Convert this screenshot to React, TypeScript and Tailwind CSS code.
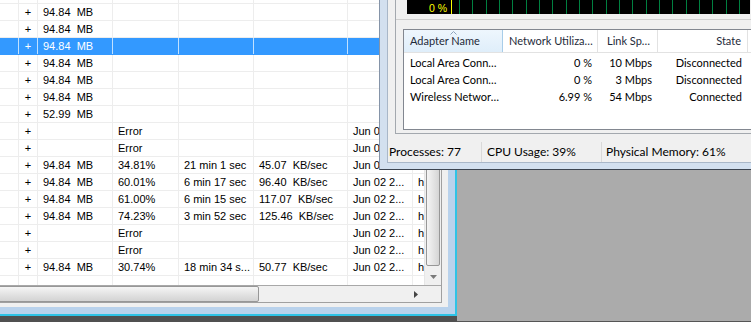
import React from "react";

type BackRow = {
  size?: string;
  pct?: string;
  time?: string;
  speed?: string;
  date?: string;
  url?: string;
  sel?: boolean;
};

const MB = "94.84  MB";
const JUN = "Jun 02 2...";

const backRows: BackRow[] = [
  { size: MB },
  { size: MB },
  { size: MB },
  { size: MB, sel: true },
  { size: MB },
  { size: MB },
  { size: MB },
  { size: "52.99  MB" },
  { pct: "Error", date: JUN, url: "h" },
  { pct: "Error", date: JUN, url: "h" },
  { size: MB, pct: "34.81%", time: "21 min 1 sec", speed: "45.07  KB/sec", date: JUN, url: "h" },
  { size: MB, pct: "60.01%", time: "6 min 17 sec", speed: "96.40  KB/sec", date: JUN, url: "h" },
  { size: MB, pct: "61.00%", time: "6 min 15 sec", speed: "117.07  KB/sec", date: JUN, url: "h" },
  { size: MB, pct: "74.23%", time: "3 min 52 sec", speed: "125.46  KB/sec", date: JUN, url: "h" },
  { pct: "Error", date: JUN, url: "h" },
  { pct: "Error", date: JUN, url: "h" },
  { size: MB, pct: "30.74%", time: "18 min 34 s...", speed: "50.77  KB/sec", date: JUN, url: "h" },
  {},
];

const adapters = [
  ["Local Area Conn…", "0 %", "10 Mbps", "Disconnected"],
  ["Local Area Conn…", "0 %", "3 Mbps", "Disconnected"],
  ["Wireless Networ…", "6.99 %", "54 Mbps", "Connected"],
];

function DownloadRow({ row }: { row: BackRow }) {
  const line = row.sel ? "border-white/70" : "border-[#ededed]";
  const cell = `shrink-0 h-full border-r ${line} pl-[5px] whitespace-pre overflow-hidden`;
  const hasPlus = row.size !== undefined || row.pct !== undefined;
  return (
    <div
      className={`flex h-[17px] border-b leading-[16px] ${
        row.sel ? "bg-[#3399ff] text-white border-[#3399ff]" : "border-[#ededed] text-black"
      }`}
    >
      <div className={`shrink-0 w-[19px] h-full border-r ${line}`} />
      <div className={`shrink-0 w-[19px] h-full border-r ${line} text-center`}>{hasPlus ? "+" : ""}</div>
      <div className={`w-[75px] ${cell}`}>{row.size}</div>
      <div className={`w-[66px] ${cell}`}>{row.pct}</div>
      <div className={`w-[75px] ${cell} pl-[4px]`}>{row.time}</div>
      <div className={`w-[94px] ${cell} pl-[4px]`}>{row.speed}</div>
      <div className={`w-[65px] ${cell} pl-[4px]`}>{row.date}</div>
      <div className="flex-1 min-w-0 h-full pl-[5px] whitespace-pre overflow-hidden">{row.url}</div>
    </div>
  );
}

function BackWindow() {
  return (
    <div className="flex flex-col w-[457px] shrink-0 h-full">
      <div className="h-[316px] w-[457px] border-r-2 border-b-2 border-[#2ec3e6]">
        <div className="h-full border-r-[7px] border-b-[7px] border-[#b9d2ec]">
          <div className="h-full border-r-[6px] border-b-[4px] border-[#f0f0f0]">
            <div className="h-full border-r border-b border-[#a0a0a0] flex flex-col bg-white">
              <div className="flex flex-1 min-h-0">
                <div className="w-[424px] shrink-0 h-full overflow-hidden text-[11px]">
                  <div className="-mt-[13px]">
                    {backRows.map((r, i) => (
                      <DownloadRow key={i} row={r} />
                    ))}
                  </div>
                </div>
                <div className="w-[17px] shrink-0 h-full flex flex-col bg-[#f0f0f0] border-l border-[#e6e6e6]">
                  <div className="mt-[20px] h-[246px] mx-px rounded-[2px] border border-[#979797] bg-gradient-to-r from-[#f5f5f5] to-[#d5d5d5]" />
                  <div className="flex-1" />
                  <div className="h-[17px] flex items-center justify-center">
                    <svg width="7" height="4" viewBox="0 0 7 4">
                      <path d="M0 0h7L3.5 4z" fill="#7a7a7a" />
                    </svg>
                  </div>
                </div>
              </div>
              <div className="h-[17px] flex border-t border-[#a8a8a8]">
                <div className="w-[424px] shrink-0 h-full flex bg-[#f0f0f0]">
                  <div className="w-[263px] h-full -ml-[4px] rounded-[2px] border border-[#979797] bg-gradient-to-b from-[#f5f5f5] to-[#d3d3d3]" />
                  <div className="flex-1" />
                  <div className="w-[17px] h-full flex items-center justify-center">
                    <svg width="4" height="7" viewBox="0 0 4 7">
                      <path d="M0 0v7l4-3.5z" fill="#444" />
                    </svg>
                  </div>
                </div>
                <div className="w-[17px] h-full bg-[#f0f0f0]" />
              </div>
            </div>
          </div>
        </div>
      </div>
      <div className="flex-1 bg-[#505050]" />
    </div>
  );
}

function NetworkGraph() {
  const xs: number[] = [];
  for (let x = 52; x < 343; x += 13.33) xs.push(Math.round(x) + 0.5);
  return (
    <svg width="343" height="14" className="block">
      <rect width="343" height="14" fill="#000" />
      {xs.map((x) => (
        <line key={x} x1={x} y1="0" x2={x} y2="14" stroke="#008040" strokeWidth="1" />
      ))}
      <line x1="44.5" y1="0" x2="44.5" y2="14" stroke="#ffff00" strokeWidth="1" />
      <text x="22" y="12" fill="#ffff00" fontSize="10.5" fontFamily="Liberation Sans, Arial, sans-serif">
        0 %
      </text>
    </svg>
  );
}

function TaskManager() {
  return (
    <div className="absolute left-[379px] top-0 w-[380px] h-[170px] border-l border-b border-l-[#8594a8] border-b-[#3c4450] font-['Lato',sans-serif]">
      <div className="h-full border-l-[7px] border-b-[6px] border-[#d3e0ef]">
        <div className="h-full border-l border-b border-[#a9b7c8] bg-[#f0f0f0] flex flex-col">
          <div className="h-[134px] pl-[7px] flex">
            <div className="flex-1 h-full border-l border-b border-[#a3a8ae] flex flex-col">
              <div className="h-[20px] border-b border-[#cfcfcf] pl-[11px]">
                <NetworkGraph />
              </div>
              <div className="mt-[9px] ml-[7px] h-[101px] border border-r-0 border-[#828790] bg-white text-[11px]">
                <div className="flex h-[23px] border-b border-[#e2e2e2] text-[#1e2a3a]">
                  <div className="relative w-[99px] h-full border-r border-[#a8cde9] bg-gradient-to-b from-[#eef6fd] to-[#dfeefa] pl-[6px] flex items-center">
                    <svg width="7" height="4" viewBox="0 0 7 4" className="absolute left-[46px] top-[1px]">
                      <path d="M0.5 3.5L3.5 0.5L6.5 3.5" fill="none" stroke="#8ea4bd" strokeWidth="1" />
                    </svg>
                    Adapter Name
                  </div>
                  <div className="w-[95px] h-full border-r border-[#e2e2e2] pl-[6px] flex items-center whitespace-nowrap">
                    Network Utiliza…
                  </div>
                  <div className="w-[60px] h-full border-r border-[#e2e2e2] pl-[9px] flex items-center whitespace-nowrap">
                    Link Sp…
                  </div>
                  <div className="w-[90px] h-full border-r border-[#e2e2e2] pr-[6px] flex items-center justify-end">
                    State
                  </div>
                  <div className="flex-1" />
                </div>
                <div className="pt-[2px]">
                  {adapters.map((a, i) => (
                    <div key={i} className="flex h-[17px] items-center text-black whitespace-nowrap">
                      <div className="w-[99px] pl-[6px]">{a[0]}</div>
                      <div className="w-[95px] pr-[6px] text-right">{a[1]}</div>
                      <div className="w-[60px] pr-[6px] text-right">{a[2]}</div>
                      <div className="w-[90px] pr-[6px] text-right">{a[3]}</div>
                    </div>
                  ))}
                </div>
              </div>
            </div>
          </div>
          <div className="flex-1 mt-[6px] flex items-center text-[12px] text-black pt-[2px]">
            <div className="w-[94px] h-full pl-px flex items-center border-r border-[#d9d9d9]">Processes: 77</div>
            <div className="w-[120px] h-full pl-[5px] flex items-center border-r border-[#d9d9d9]">CPU Usage: 39%</div>
            <div className="flex-1 h-full pl-[4px] flex items-center">Physical Memory: 61%</div>
          </div>
        </div>
      </div>
    </div>
  );
}

export default function App() {
  return (
    <div className="relative w-[751px] h-[322px] overflow-hidden bg-[#ababab] font-['Liberation_Sans',Arial,sans-serif]">
      <div className="flex h-full">
        <BackWindow />
        <div className="flex-1 flex flex-col">
          <div className="flex-1" />
          <div className="h-px bg-[#555]" />
        </div>
      </div>
      <TaskManager />
    </div>
  );
}
